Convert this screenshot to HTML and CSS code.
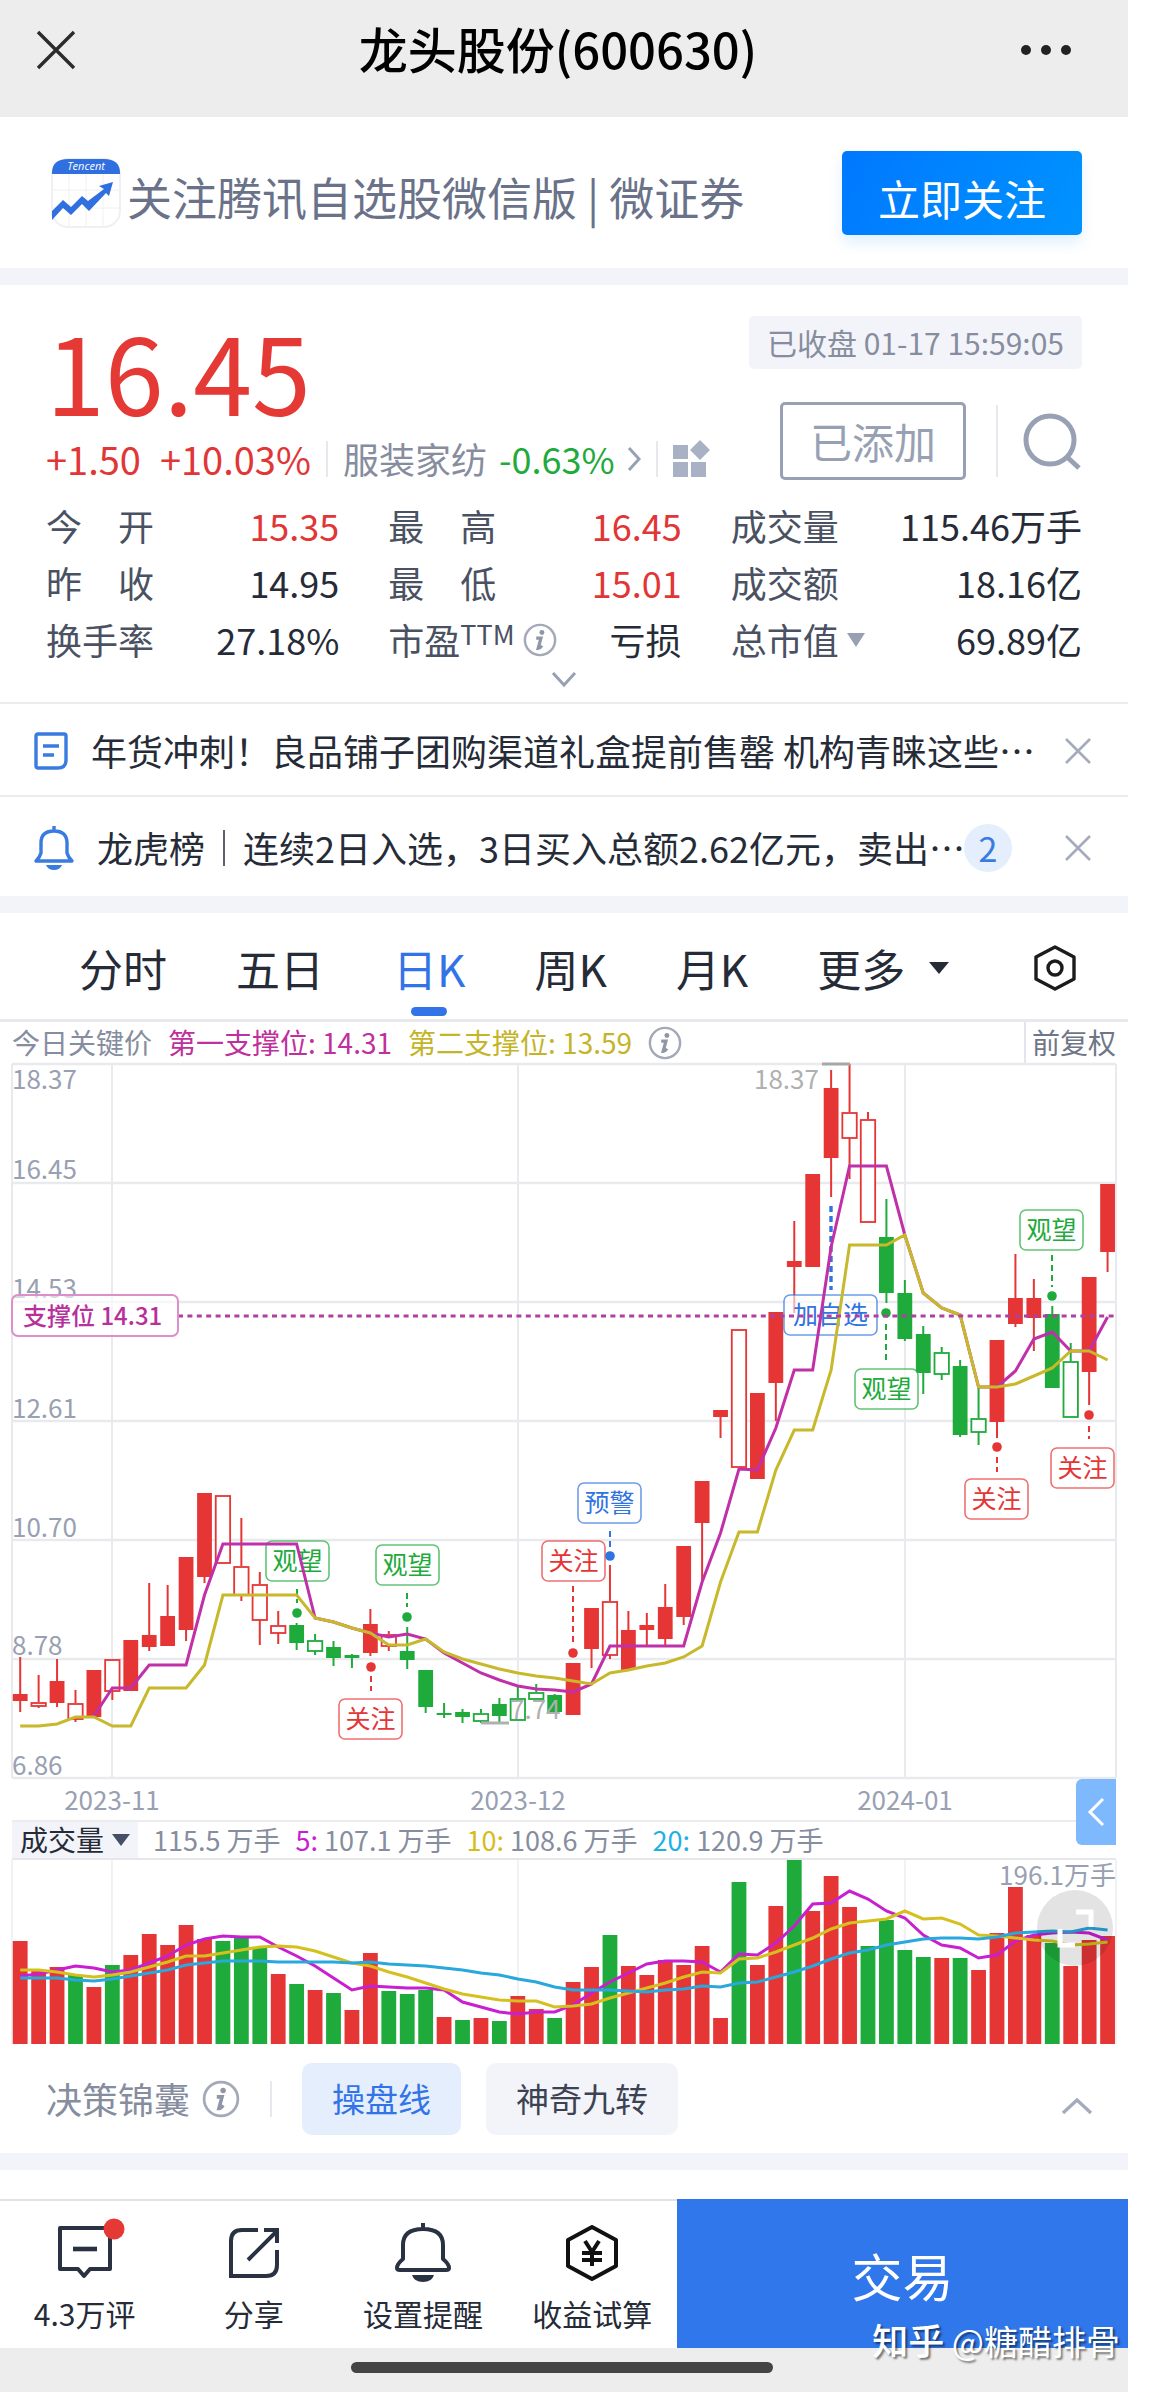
FILE: index.html
```html
<!DOCTYPE html>
<html lang="zh-CN">
<head>
    <meta charset="UTF-8">
    <meta name="viewport" content="width=device-width, initial-scale=1">
    <title>龙头股份(600630)</title>
    <link rel="stylesheet" href="styles.css">
</head>
<body>

<header class="nav">
    <button class="icon-btn" aria-label="关闭">
        <svg width="40" height="40" viewBox="0 0 40 40"><path d="M2 2L38 38M38 2L2 38" stroke="#2b2b2b" stroke-width="3.4" fill="none"/></svg>
    </button>
    <h1>龙头股份(600630)</h1>
    <button class="icon-btn" aria-label="更多">
        <svg width="52" height="12" viewBox="0 0 52 12" fill="#222"><circle cx="6" cy="6" r="5"/><circle cx="26" cy="6" r="5"/><circle cx="46" cy="6" r="5"/></svg>
    </button>
</header>

<section class="banner">
    <svg class="logo" width="70" height="70" viewBox="0 0 70 70">
        <rect x="1" y="1" width="68" height="68" rx="16" fill="#fff" stroke="#eef0f3" stroke-width="2"/>
        <path d="M18 16V68M35 16V68M52 16V68M1 32H69M1 50H69" stroke="#f4f0ee" stroke-width="1"/>
        <path d="M1 16V15Q1 1 17 1H53Q69 1 69 15V16Z" fill="#2f6fe0"/>
        <text x="35" y="12" text-anchor="middle" class="logo-text">Tencent</text>
        <path d="M1 53L12 42L20 49L31 38L37 43L53 31L48 28L62 24L58 38L55 35L38 53L31 46L20 57L12 50L1 62Z" fill="#2f6fe0"/>
    </svg>
    <span class="banner-text">关注腾讯自选股微信版 | 微证券</span>
    <button class="follow">立即关注</button>
</section>

<div class="band"></div>

<section class="quote">
    <div class="quote-top">
        <div class="quote-left">
            <div class="price">16.45</div>
            <div class="change">
                <span class="red change-num">+1.50</span>
                <span class="red change-num">+10.03%</span>
                <i class="sep"></i>
                <a class="sector" href="#">服装家纺 <span class="green">-0.63%</span>
                    <svg width="14" height="26" viewBox="0 0 14 26"><path d="M2 2L12 13L2 24" stroke="#98a1b3" stroke-width="3" fill="none"/></svg>
                </a>
                <i class="sep"></i>
                <button class="icon-btn" aria-label="板块">
                    <svg width="38" height="38" viewBox="0 0 38 38" fill="#a9b1c4"><rect x="0" y="5" width="15" height="14"/><rect x="0" y="22" width="15" height="15"/><rect x="18" y="22" width="15" height="15"/><path d="M27 0L37 10L27 20L17 10Z"/></svg>
                </button>
            </div>
        </div>
        <div class="quote-right">
            <div class="time">已收盘 01-17 15:59:05</div>
            <div class="actions">
                <button class="added">已添加</button>
                <i class="sep tall"></i>
                <button class="icon-btn" aria-label="搜索">
                    <svg width="60" height="60" viewBox="0 0 60 60" fill="none" stroke="#98a1b3" stroke-width="5"><circle cx="28" cy="29" r="24"/><path d="M45 46L57 57"/></svg>
                </button>
            </div>
        </div>
    </div>
    <dl class="stats">
        <div><dt>今　开</dt><dd class="red">15.35</dd></div>
        <div><dt>最　高</dt><dd class="red">16.45</dd></div>
        <div><dt>成交量</dt><dd>115.46万手</dd></div>
        <div><dt>昨　收</dt><dd>14.95</dd></div>
        <div><dt>最　低</dt><dd class="red">15.01</dd></div>
        <div><dt>成交额</dt><dd>18.16亿</dd></div>
        <div><dt>换手率</dt><dd>27.18%</dd></div>
        <div><dt>市盈<sup>TTM</sup><svg class="info" viewBox="0 0 36 36"><use href="#i-info"/></svg></dt><dd>亏损</dd></div>
        <div><dt>总市值<svg class="caret" width="18" height="14" viewBox="0 0 18 14"><path d="M0 0H18L9 14Z" fill="#98a1b3"/></svg></dt><dd>69.89亿</dd></div>
    </dl>
    <button class="icon-btn expand" aria-label="展开">
        <svg width="24" height="16" viewBox="0 0 24 16"><path d="M1 1L12 13L23 1" stroke="#98a1b3" stroke-width="3" fill="none"/></svg>
    </button>
</section>

<section class="notices">
    <div class="notice">
        <svg width="34" height="38" viewBox="0 0 34 38" fill="none" stroke="#3a7be0" stroke-width="3.4"><path d="M4 2H30Q32 2 32 4V28Q32 36 24 36H4Q2 36 2 34V4Q2 2 4 2Z"/><path d="M9 14H25M9 23H20"/></svg>
        <a class="notice-text" href="#">年货冲刺！良品铺子团购渠道礼盒提前售罄 机构青睐这些…</a>
        <button class="icon-btn" aria-label="关闭"><svg width="28" height="28" viewBox="0 0 28 28"><use href="#i-x"/></svg></button>
    </div>
    <div class="notice">
        <svg width="40" height="44" viewBox="0 0 40 44" fill="none" stroke="#3a7be0" stroke-width="3.4" stroke-linejoin="round"><path d="M20 0V5M2 35H38Q34 31 33 27V17Q33 5 20 5Q7 5 7 17V27Q6 31 2 35Z"/><path d="M12 39H28Q26 44 20 44Q14 44 12 39Z" fill="#3a7be0" stroke="none"/></svg>
        <a class="notice-text" href="#"><span>龙虎榜</span><i class="bar"></i><span>连续2日入选，3日买入总额2.62亿元，卖出…</span></a>
        <span class="count">2</span>
        <button class="icon-btn" aria-label="关闭"><svg width="28" height="28" viewBox="0 0 28 28"><use href="#i-x"/></svg></button>
    </div>
</section>

<div class="band"></div>

<nav class="tabs">
    <button>分时</button>
    <button>五日</button>
    <button class="active">日K</button>
    <button>周K</button>
    <button>月K</button>
    <button class="more">更多<svg width="20" height="12" viewBox="0 0 20 12"><path d="M0 0H20L10 12Z" fill="#262b38"/></svg></button>
    <button class="setting" aria-label="设置">
        <svg width="42" height="46" viewBox="0 0 42 46" fill="none" stroke="#1c1c1c" stroke-width="3.4" stroke-linejoin="round"><path d="M21 2L40 12V34L21 44L2 34V12Z"/><circle cx="21" cy="23" r="7"/></svg>
    </button>
</nav>

<section class="chart">
    <div class="keys">
        <span class="muted">今日关键价</span>
        <span class="magenta">第一支撑位: 14.31</span>
        <span class="yellow">第二支撑位: 13.59</span>
        <svg class="info" viewBox="0 0 36 36"><use href="#i-info"/></svg>
        <button class="adjust">前复权</button>
    </div>
    <svg id="kline" class="plot" viewBox="0 0 1128 756"></svg>
    <div class="vol-head">
        <button class="indicator">成交量<svg width="18" height="12" viewBox="0 0 18 12"><path d="M0 0H18L9 12Z" fill="#454f66"/></svg></button>
        <span>115.5 万手</span>
        <span><b class="c5">5:</b> 107.1 万手</span>
        <span><b class="c10">10:</b> 108.6 万手</span>
        <span><b class="c20">20:</b> 120.9 万手</span>
        <button class="drawer" aria-label="展开侧栏">
            <svg width="18" height="30" viewBox="0 0 18 30"><path d="M16 2L3 15L16 28" stroke="#fff" stroke-width="3" fill="none"/></svg>
        </button>
    </div>
    <div class="vol-wrap">
        <svg id="volume" class="plot" viewBox="0 0 1128 185"></svg>
        <button class="full" aria-label="全屏">
            <svg width="76" height="76" viewBox="0 0 76 76" fill="none" stroke="#fff" stroke-width="5"><path d="M39 22H54V37M23 39V55H38"/></svg>
        </button>
    </div>
</section>

<section class="tips">
    <span class="muted tips-title">决策锦囊</span>
    <svg class="info big" viewBox="0 0 36 36"><use href="#i-info"/></svg>
    <i class="sep"></i>
    <button class="chip on">操盘线</button>
    <button class="chip">神奇九转</button>
    <button class="icon-btn fold" aria-label="收起">
        <svg width="30" height="16" viewBox="0 0 30 16"><path d="M1 15L15 2L29 15" stroke="#a3abbd" stroke-width="3.4" fill="none"/></svg>
    </button>
</section>

<div class="band"></div>
<div class="gap"></div>

<footer class="toolbar">
    <button class="tool">
        <svg width="64" height="64" viewBox="0 0 64 64" fill="none" stroke="#2a3142" stroke-width="4"><path d="M7 9H57V50H37L31 57L25 50H7Z" stroke-linejoin="round"/><path d="M20 30H44" stroke-width="4.6"/><circle cx="61" cy="10" r="10.5" fill="#e53935" stroke="none"/></svg>
        4.3万评
    </button>
    <button class="tool">
        <svg width="64" height="64" viewBox="0 0 64 64" fill="none" stroke="#2a3142" stroke-width="4"><path d="M36 11H20Q9 11 9 22V57H44Q55 57 55 46V31"/><path d="M26 41L54 13M42 11H55V24"/></svg>
        分享
    </button>
    <button class="tool">
        <svg width="64" height="64" viewBox="0 0 64 64" fill="none" stroke="#2a3142" stroke-width="4" stroke-linejoin="round"><path d="M32 4V10M6 49Q6 45 12 40V26Q12 10 32 10Q52 10 52 26V40Q58 45 58 49Q58 51 55 51H9Q6 51 6 49Z"/><path d="M21 56H43Q41 63 32 63Q23 63 21 56Z" fill="#2a3142" stroke="none"/></svg>
        设置提醒
    </button>
    <button class="tool">
        <svg width="64" height="64" viewBox="0 0 64 64" fill="none" stroke="#111" stroke-width="4" stroke-linejoin="round"><path d="M32 8L56 21V47L32 60L8 47V21Z"/><path d="M25 22L32 33L39 22M32 33V47M22 34H42M22 41H42"/></svg>
        收益试算
    </button>
    <button class="trade">交易</button>
    <div class="watermark"><b>知乎</b> @糖醋排骨</div>
</footer>

<div class="home"><i></i></div>

<svg class="defs" aria-hidden="true">
    <symbol id="i-x" viewBox="0 0 28 28"><path d="M2 2L26 26M26 2L2 26" stroke="#a3abbd" stroke-width="2.6" fill="none"/></symbol>
    <symbol id="i-info" viewBox="0 0 36 36"><circle cx="18" cy="18" r="16" fill="none" stroke="#a3a9b8" stroke-width="2.6"/><circle cx="20" cy="10" r="2.6" fill="#8f96a6"/><path d="M14 16H19L16 27Q18 27 20 24" fill="none" stroke="#8f96a6" stroke-width="3.4"/></symbol>
</svg>

<script src="script.js"></script>
</body>
</html>
```
FILE: styles.css
```css
* {
    box-sizing: border-box;
}

body {
    margin: 0;
    padding-right: 24px;
    background: #fff;
    color: #262b38;
    font-family: "Noto Sans CJK SC", "Noto Sans", sans-serif;
    font-size: 36px;
    line-height: 1.2;
}

button {
    margin: 0;
    padding: 0;
    border: none;
    background: none;
    color: inherit;
    font: inherit;
    cursor: pointer;
}

a {
    color: inherit;
    text-decoration: none;
}

svg {
    display: block;
    flex: none;
    overflow: visible;
}

i {
    flex: none;
}

.red { color: #e23636; }
.green { color: #1faa3c; }
.muted { color: #868d9e; }
.magenta { color: #c0309c; }
.yellow { color: #c4b428; }

.defs {
    position: absolute;
    width: 0;
    height: 0;
}

.icon-btn {
    flex: none;
}

.band {
    height: 17px;
    background: #f3f4f9;
}

.sep {
    width: 2px;
    height: 36px;
    background: #e6e8ee;
}

.sep.tall {
    height: 72px;
}

.info {
    width: 34px;
    height: 34px;
}

/* top bar */
.nav {
    display: flex;
    justify-content: space-between;
    padding: 18px 48px 0 36px;
    height: 117px;
    background: #ededed;
    color: #000;
}

.nav .icon-btn {
    width: 60px;
    height: 64px;
    display: flex;
    align-items: center;
}

.nav h1 {
    margin: 0;
    font-size: 49px;
    font-weight: 500;
    line-height: 60px;
}

/* follow banner */
.banner {
    display: flex;
    align-items: center;
    height: 151px;
    padding: 0 46px 0 51px;
}

.logo-text {
    fill: #fff;
    font-size: 11px;
    font-style: italic;
    font-family: "Open Sans", sans-serif;
}

.banner-text {
    flex: 1;
    margin-left: 6px;
    padding-top: 8px;
    color: #6a7289;
    font-size: 45px;
    white-space: nowrap;
}

.follow {
    width: 240px;
    height: 84px;
    padding-top: 12px;
    border-radius: 5px;
    background: linear-gradient(120deg, #0078ff, #0093ff);
    box-shadow: 0 8px 14px rgba(0, 140, 255, 0.12);
    color: #fff;
    font-size: 42px;
}

/* quote */
.quote {
    padding: 31px 46px 0;
    height: 419px;
    border-bottom: 2px solid #ececee;
}

.quote-top {
    display: flex;
    justify-content: space-between;
}

.price {
    height: 118px;
    color: #e53935;
    font-size: 106px;
    font-weight: 400;
    line-height: 108px;
}

.change {
    display: flex;
    align-items: center;
    height: 50px;
    gap: 15px;
    white-space: nowrap;
}

.change-num {
    font-size: 38px;
}

.change-num + .change-num {
    margin-left: 4px;
}

.sector {
    display: flex;
    align-items: center;
    gap: 12px;
    color: #868d9e;
}

.quote-right {
    display: flex;
    flex-direction: column;
    align-items: flex-end;
}

.time {
    padding: 0 18px;
    border-radius: 5px;
    background: #f3f4f9;
    color: #868d9e;
    font-size: 30px;
    line-height: 53px;
}

.actions {
    display: flex;
    align-items: center;
    margin-top: 33px;
}

.added {
    width: 186px;
    height: 78px;
    margin-right: 30px;
    border: 3px solid #98a1b3;
    border-radius: 5px;
    color: #98a1b3;
    font-size: 42px;
}

.actions .icon-btn {
    margin-left: 24px;
}

.stats {
    display: grid;
    grid-template-columns: 293fr 293fr 351fr;
    column-gap: 49px;
    margin: 13px 0 0;
    line-height: 57px;
}

.stats div {
    display: flex;
    justify-content: space-between;
    white-space: nowrap;
}

.stats dt {
    display: flex;
    align-items: center;
    color: #4a5162;
}

.stats dd {
    margin: 0;
}

.stats sup {
    align-self: flex-start;
    padding-top: 5px;
    margin-right: 8px;
    font-size: 27px;
    line-height: 36px;
}

.caret {
    margin-left: 8px;
}

.expand {
    display: block;
    margin: 4px auto 0;
}

/* notices */
.notice {
    display: flex;
    align-items: center;
    height: 93px;
    padding: 2px 36px 0 34px;
    border-bottom: 2px solid #ececee;
}

.notice + .notice {
    height: 99px;
    border-bottom: none;
}

.notice-text {
    flex: 1;
    display: flex;
    align-items: center;
    min-width: 0;
    margin-left: 23px;
    white-space: nowrap;
}

.bar {
    width: 2px;
    height: 36px;
    margin: 0 18px;
    background: #5a6070;
}

.count {
    width: 48px;
    height: 48px;
    margin-right: 52px;
    border-radius: 50%;
    background: #e4eefc;
    color: #3a7be0;
    font-size: 34px;
    line-height: 48px;
    text-align: center;
}

/* period tabs */
.tabs {
    display: flex;
    gap: 69px;
    height: 109px;
    padding: 0 52px 0 79px;
    border-bottom: 3px solid #e8e9ed;
    font-size: 44px;
}

.tabs button {
    position: relative;
    padding-top: 4px;
    white-space: nowrap;
}

.tabs .active {
    color: #3274e8;
}

.tabs .active::after {
    content: "";
    position: absolute;
    left: 50%;
    bottom: 3px;
    width: 36px;
    height: 9px;
    margin-left: -18px;
    border-radius: 5px;
    background: #3274e8;
}

.tabs .more {
    display: flex;
    align-items: center;
    gap: 24px;
}

.tabs .setting {
    margin-left: auto;
}

/* chart */
.keys {
    display: flex;
    align-items: center;
    gap: 16px;
    height: 42px;
    padding: 0 12px;
    font-size: 28px;
    white-space: nowrap;
}

.adjust {
    align-self: stretch;
    margin-left: auto;
    padding-left: 6px;
    border-left: 2px solid #e4e5ea;
    color: #6f7687;
}

.plot {
    width: 100%;
    height: auto;
}

.plot text {
    font-size: 26px;
}

.plot .axis { fill: #98a0b2; }
.plot .extreme { fill: #b0b0b0; }
.plot .signal { font-size: 25px; text-anchor: middle; }
.plot .support { font-size: 24px; font-weight: 500; fill: #b8309c; }
.plot .mid { text-anchor: middle; }
.plot .end { text-anchor: end; }

.vol-head {
    position: relative;
    display: flex;
    align-items: center;
    gap: 15px;
    height: 40px;
    margin: 0 12px;
    border-top: 2px solid #ececee;
    border-bottom: 2px solid #e6e7eb;
    color: #868d9e;
    font-size: 27px;
    white-space: nowrap;
}

.vol-head b {
    font-weight: 400;
}

.c5 { color: #c81fd0; }
.c10 { color: #d6bc1c; }
.c20 { color: #1fb0e6; }

.indicator {
    display: flex;
    align-items: center;
    align-self: stretch;
    gap: 8px;
    padding: 0 8px;
    background: #f3f4f9;
    color: #262b38;
    font-size: 28px;
}

.drawer {
    position: absolute;
    right: 0;
    top: -43px;
    display: flex;
    align-items: center;
    justify-content: center;
    width: 40px;
    height: 66px;
    border-radius: 6px 0 0 6px;
    background: #7fb9fd;
}

.vol-wrap {
    position: relative;
}

.full {
    position: absolute;
    right: 15px;
    top: 30px;
    border-radius: 50%;
    background: rgba(0, 0, 0, 0.11);
}

/* strategy chips */
.tips {
    display: flex;
    align-items: center;
    height: 108px;
    padding: 0 36px 0 46px;
}

.info.big {
    width: 38px;
    height: 38px;
    margin: 0 30px 0 12px;
}

.tips .sep {
    margin-right: 30px;
}

.chip {
    height: 72px;
    margin-right: 25px;
    padding: 0 30px;
    border-radius: 10px;
    background: #f3f4f9;
    color: #3c4252;
    font-size: 33px;
}

.chip.on {
    background: #e4eefc;
    color: #3274e8;
}

.fold {
    margin-left: auto;
    padding-top: 14px;
}

/* bottom bar */
.gap {
    height: 29px;
}

.toolbar {
    position: relative;
    display: flex;
    height: 149px;
}

.tool {
    flex: 3;
    display: flex;
    flex-direction: column;
    align-items: center;
    gap: 12px;
    padding-top: 18px;
    border-top: 2px solid #e2e3e6;
    font-size: 30px;
    white-space: nowrap;
}

.trade {
    flex: 8;
    padding-top: 4px;
    background: #2f77ea;
    color: #fff;
    font-size: 51px;
}

.watermark {
    position: absolute;
    right: 8px;
    bottom: -14px;
    color: #fff;
    font-size: 34px;
    text-shadow: 2px 2px 2px rgba(0, 0, 0, 0.5);
    white-space: nowrap;
}

.watermark b {
    font-size: 36px;
    font-weight: 500;
}

.home {
    display: flex;
    justify-content: center;
    height: 44px;
    padding: 14px 4px 0 0;
    background: #ededed;
}

.home i {
    width: 422px;
    height: 11px;
    border-radius: 6px;
    background: #444;
}
```
FILE: script.js
```js
const RED = '#e53535';
const GREEN = '#1faa3c';
const BLUE = '#2f74e0';
const LEFT = 12;
const RIGHT = 1116;
const MONTHS = [[112, '2023-11'], [518, '2023-12'], [905, '2024-01']];

// [kind, high, body top, body bottom, low]; capital = solid body, r/g = red/green
const candles = [
    ['R', 593, 630, 637, 648], ['r', 611, 638, 642, 644], ['R', 595, 617, 639, 643], ['r', 626, 639, 655, 658],
    ['R', 606, 606, 653, 653], ['r', 595, 595, 627, 636], ['R', 576, 576, 627, 627], ['R', 519, 571, 583, 587],
    ['R', 521, 552, 582, 582], ['R', 493, 493, 566, 577], ['R', 429, 429, 513, 519], ['r', 431, 431, 499, 499],
    ['r', 454, 502, 531, 537], ['r', 508, 520, 556, 581], ['r', 547, 561, 569, 580], ['G', 559, 561, 579, 586],
    ['g', 570, 576, 587, 591], ['G', 577, 583, 594, 602], ['G', 590, 591, 594, 604], ['R', 545, 560, 589, 592],
    ['r', 567, 570, 582, 587], ['G', 563, 587, 596, 605], ['G', 606, 606, 643, 649], ['G', 639, 649, 651, 654],
    ['G', 645, 648, 653, 659], ['g', 645, 649, 657, 659], ['G', 634, 640, 652, 658], ['g', 622, 634, 656, 656],
    ['g', 620, 628, 635, 635], ['G', 630, 631, 648, 648], ['R', 599, 599, 651, 651], ['R', 544, 544, 585, 604],
    ['r', 501, 537, 591, 595], ['R', 547, 566, 606, 606], ['R', 549, 561, 566, 582], ['R', 520, 543, 575, 581],
    ['R', 482, 482, 553, 561], ['R', 417, 417, 459, 518], ['R', 346, 346, 353, 374], ['r', 265, 265, 403, 403],
    ['R', 329, 329, 415, 415], ['R', 248, 248, 319, 357], ['R', 157, 197, 203, 249], ['R', 110, 110, 203, 203],
    ['R', 6, 24, 94, 133], ['r', 0, 48, 74, 115], ['r', 48, 55, 158, 158], ['G', 135, 173, 229, 239],
    ['G', 216, 229, 275, 277], ['G', 262, 270, 309, 330], ['g', 283, 288, 310, 316], ['G', 296, 302, 371, 373],
    ['g', 323, 354, 368, 381], ['R', 276, 276, 358, 374], ['R', 190, 234, 260, 263], ['R', 215, 234, 254, 287],
    ['G', 242, 250, 324, 324], ['g', 279, 297, 353, 353], ['R', 213, 213, 308, 341], ['R', 120, 120, 188, 208]
];

// support lines, one value for each candle
const first = [null, null, null, null, 652, 624, 624, 601, 601, 601, 531, 480, 480, 480, 480, 480, 554, 558, 564, 569,
    573, 570, 575, 589, 599, 609, 616, 622, 625, 626, 628, 620, 582, 582, 582, 582, 582, 518, 469, 405,
    406, 364, 306, 306, 183, 102, 102, 102, 171, 229, 244, 251, 323, 323, 307, 275, 268, 287, 287, 253];
const second = [662, 662, 660, 653, 653, 662, 662, 624, 624, 624, 601, 531, 531, 531, 531, 531, 554, 558, 564, 569,
    581, 581, 575, 588, 595, 600, 605, 609, 612, 614, 617, 620, 609, 606, 602, 599, 593, 582, 518, 468,
    468, 406, 366, 366, 306, 181, 181, 181, 171, 229, 244, 251, 323, 323, 320, 312, 304, 287, 287, 296];

// box x, box y, box width, label, colour, line x, line from, line to, dot y
const signals = [
    [266, 477, 63, '观望', GREEN, 297, 525, 539, 549],
    [376, 481, 63, '观望', GREEN, 407, 529, 543, 553],
    [339, 635, 63, '关注', RED, 371, 612, 627, 603],
    [542, 477, 63, '关注', RED, 573, 522, 579, 589],
    [578, 419, 63, '预警', BLUE, 610, 467, 483, 492],
    [784, 231, 93, '加自选', BLUE, 831, 142, 226, null],
    [855, 305, 63, '观望', GREEN, 886, 260, 299, 249],
    [1020, 146, 63, '观望', GREEN, 1052, 191, 223, 232],
    [965, 415, 63, '关注', RED, 997, 393, 408, 383],
    [1051, 384, 63, '关注', RED, 1089, 362, 375, 351]
];

const volumes = [
    ['R', 81], ['R', 110], ['R', 107], ['G', 115], ['R', 127], ['G', 105], ['R', 95], ['R', 74], ['R', 85], ['R', 65],
    ['R', 79], ['G', 81], ['G', 78], ['G', 87], ['R', 114], ['G', 124], ['R', 130], ['G', 133], ['R', 150], ['R', 93],
    ['G', 131], ['G', 134], ['G', 130], ['R', 157], ['G', 160], ['R', 158], ['G', 161], ['R', 136], ['R', 149], ['G', 158],
    ['R', 122], ['R', 107], ['G', 75], ['R', 106], ['R', 115], ['R', 100], ['R', 105], ['R', 86], ['R', 158], ['G', 22],
    ['R', 105], ['R', 46], ['G', 0], ['R', 51], ['R', 16], ['R', 47], ['G', 86], ['G', 60], ['G', 90], ['G', 97],
    ['R', 98], ['G', 98], ['R', 110], ['R', 73], ['R', 27], ['R', 75], ['G', 83], ['R', 106], ['R', 80], ['R', 76]
];
const ma5 = [116, 114, 110, 106, 108, 112, 110, 103, 96, 85, 79, 76, 77, 77, 87, 96, 106, 118, 130, 126,
    127, 128, 128, 130, 142, 147, 152, 154, 152, 152, 145, 133, 122, 113, 104, 101, 101, 102, 112, 94,
    95, 83, 66, 44, 43, 31, 39, 51, 58, 75, 85, 88, 98, 95, 81, 75, 73, 72, 73, 80];
const ma10 = [110, 110, 112, 115, 117, 115, 112, 107, 102, 96, 96, 93, 90, 87, 86, 87, 91, 97, 103, 106,
    112, 117, 123, 129, 134, 137, 140, 141, 141, 147, 146, 144, 138, 133, 128, 123, 117, 112, 113, 99,
    98, 92, 85, 78, 69, 63, 61, 59, 51, 59, 58, 64, 75, 76, 78, 80, 81, 85, 84, 82];
const ma20 = [118, 118, 118, 120, 121, 119, 116, 113, 110, 105, 103, 101, 101, 101, 102, 102, 102, 102, 103, 102,
    104, 105, 106, 108, 110, 113, 115, 119, 122, 127, 130, 130, 130, 131, 132, 130, 129, 126, 127, 123,
    122, 117, 112, 106, 99, 93, 90, 85, 82, 79, 78, 78, 79, 77, 73, 72, 71, 72, 68, 70];

function centerX(i) {
    return 20.2 + i * 18.43;
}

function line(x1, y1, x2, y2, color, width, dash) {
    return `<line x1="${x1}" y1="${y1}" x2="${x2}" y2="${y2}" stroke="${color}" stroke-width="${width}"` +
        (dash ? ` stroke-dasharray="${dash}"` : '') + '/>';
}

function text(x, y, value, cls, color) {
    return `<text x="${x}" y="${y}" class="${cls}"` + (color ? ` fill="${color}"` : '') + `>${value}</text>`;
}

function polyline(values, color) {
    const points = values
        .map((y, i) => y === null ? null : centerX(i) + ',' + y)
        .filter(p => p)
        .join(' ');
    return `<polyline points="${points}" fill="none" stroke="${color}" stroke-width="3"/>`;
}

function drawKline() {
    let out = '';
    for (let i = 0; i < 7; i++) {
        out += line(LEFT, i * 119, RIGHT, i * 119, '#e9eaee', 2.4);
    }
    [LEFT, RIGHT].concat(MONTHS.map(m => m[0])).forEach(x => {
        out += line(x, 0, x, 714, '#e9eaee', 2);
    });
    MONTHS.forEach(m => { out += text(m[0], 746, m[1], 'axis mid'); });

    const labels = [['18.37', 25], ['16.45', 115], ['14.53', 234], ['12.61', 354], ['10.70', 473], ['8.78', 591], ['6.86', 711]];
    labels.forEach(l => { out += text(LEFT, l[1], l[0], 'axis'); });

    candles.forEach((c, i) => {
        const [kind, high, top, bottom, low] = c;
        const x = centerX(i);
        const color = kind.toUpperCase() === 'R' ? RED : GREEN;
        out += line(x, high, x, top, color, 2) + line(x, bottom, x, low, color, 2);
        if (kind === 'R' || kind === 'G') {
            out += `<rect x="${x - 7.4}" y="${top}" width="14.8" height="${bottom - top}" fill="${color}"/>`;
        } else {
            out += `<rect x="${x - 7.2}" y="${top + 1}" width="14.4" height="${bottom - top - 1}" fill="#fff" stroke="${color}" stroke-width="1.8"/>`;
        }
    });

    out += line(822, 0, 850, 0, '#a8a8a8', 3) + text(754, 25, '18.37', 'extreme');

    signals.forEach(s => {
        const [x, y, w, label, color, lx, from, to, dot] = s;
        out += line(lx, from, lx, to, color, dot ? 2 : 3.4, '6 4');
        if (dot) {
            out += `<circle cx="${lx}" cy="${dot}" r="4.8" fill="${color}"/>`;
        }
        out += `<rect x="${x}" y="${y}" width="${w}" height="40" rx="6" fill="#fff" fill-opacity="0.6" stroke="${color}" stroke-opacity="0.7" stroke-width="1.6"/>`;
        out += text(x + w / 2, y + 29, label, 'signal', color);
    });

    out += polyline(first, '#c030a8') + polyline(second, '#c8b82c');
    out += line(481, 659, 509, 659, '#b0b0b0', 3) + text(510, 655, '7.74', 'extreme');
    out += line(178, 252, RIGHT, 252, '#b040a0', 2.8, '5 4.4');
    out += `<rect x="${LEFT}" y="231" width="166" height="41" rx="6" fill="#fff" fill-opacity="0.6" stroke="#dd8fcb" stroke-width="2"/>`;
    out += text(23, 261, '支撑位 14.31', 'support');
    document.getElementById('kline').innerHTML = out;
}

function drawVolume() {
    let out = '';
    [LEFT, RIGHT].concat(MONTHS.map(m => m[0])).forEach(x => {
        out += line(x, 0, x, 184, '#ececf0', 1.4);
    });
    volumes.forEach((v, i) => {
        out += `<rect x="${centerX(i) - 7.4}" y="${v[1]}" width="14.8" height="${184 - v[1]}" fill="${v[0] === 'R' ? RED : GREEN}"/>`;
    });
    out += text(RIGHT, 25, '196.1万手', 'axis end');
    out += polyline(ma5, '#c81fd0') + polyline(ma10, '#d6c020') + polyline(ma20, '#28a8dc');
    document.getElementById('volume').innerHTML = out;
}

drawKline();
drawVolume();
```
